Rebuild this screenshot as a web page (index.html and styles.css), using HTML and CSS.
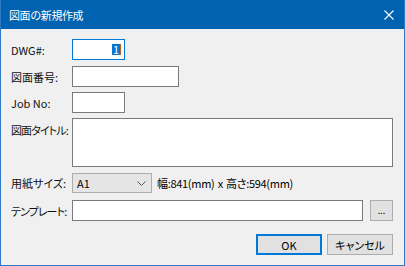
FILE: index.html
```html
<!DOCTYPE html>
<html lang="ja">
<head>
    <meta charset="UTF-8">
    <title>図面の新規作成</title>
    <link rel="stylesheet" href="styles.css">
</head>
<body>
    <div class="dialog">
        <!-- タイトルバー -->
        <div class="titlebar">
            <span class="title">図面の新規作成</span>
            <svg class="close" width="10" height="10" viewBox="0 0 10 10">
                <path d="M0.5 0.5 L9.5 9.5 M9.5 0.5 L0.5 9.5" stroke="#fff" stroke-width="1.1" fill="none"/>
            </svg>
        </div>

        <div class="form">
            <div class="row row-dwg">
                <label class="label">DWG#:</label>
                <div class="input input-short focused"><span class="sel">1</span></div>
            </div>
            <div class="row row-no">
                <label class="label">図面番号:</label>
                <div class="input input-mid"></div>
            </div>
            <div class="row row-job">
                <label class="label">Job No:</label>
                <div class="input input-short"></div>
            </div>
            <div class="row row-title">
                <label class="label tight">図面タイトル:</label>
                <div class="input textarea"></div>
            </div>
            <div class="row row-size">
                <label class="label">用紙サイズ:</label>
                <div class="combo">
                    <span>A1</span>
                    <svg width="9" height="5" viewBox="0 0 9 5">
                        <path d="M0.5 0.5 L4.5 4.5 L8.5 0.5" stroke="#555" fill="none"/>
                    </svg>
                </div>
                <span class="size-text">幅:841(mm) x 高さ:594(mm)</span>
            </div>
            <div class="row row-tpl">
                <label class="label tight">テンプレート:</label>
                <div class="input input-long"></div>
                <button class="btn browse">...</button>
            </div>
            <div class="actions">
                <button class="btn ok">OK</button>
                <button class="btn">キャンセル</button>
            </div>
        </div>
    </div>
</body>
</html>
```

FILE: styles.css
```css
/* 基本 */
body {
    margin: 0;
    font-family: "Noto Sans CJK JP", "Noto Sans", sans-serif;
    font-size: 11px;
    font-feature-settings: "palt";
    color: #000;
}

.dialog {
    width: 405px;
    height: 266px;
    box-sizing: border-box;
    background-color: #f0f0f0;
    border: 1px solid #2f78c4;
    border-top: none;
    overflow: hidden;
}

/* タイトルバー */
.titlebar {
    height: 29px;
    margin: 0 -1px;
    background-color: #0063b1;
    color: #fff;
    display: flex;
    align-items: center;
    justify-content: space-between;
    padding: 0 11px 0 9px;
}

.title {
    font-size: 11px;
    letter-spacing: -0.4px;
    font-feature-settings: normal;
}

.close {
    display: block;
}

/* フォーム */
.form {
    padding: 10px 11px 0 10px;
}

.row {
    display: flex;
    align-items: center;
    height: 21px;
}

.row-no { margin-top: 6px; }
.row-job { margin-top: 5px; }
.row-title { margin-top: 5px; align-items: flex-start; height: 49px; }
.row-size { margin-top: 6px; height: 20px; }
.row-tpl { margin-top: 7px; }

.label {
    width: 61px;
    flex-shrink: 0;
    white-space: nowrap;
    line-height: 14px;
    color: #111;
}

.tight {
    letter-spacing: -0.9px;
}

.row-title .label {
    padding-top: 5px;
}

.input {
    height: 21px;
    box-sizing: border-box;
    background-color: #fff;
    border: 1px solid #7a7a7a;
}

.input-short { width: 53px; }
.input-mid { width: 107px; }
.input-long { width: 291px; }

.textarea {
    width: 321px;
    height: 49px;
}

.focused {
    border-color: #0078d7;
    display: flex;
    align-items: center;
    justify-content: flex-end;
    padding-right: 3px;
}

.sel {
    background-color: #0078d7;
    color: #fff;
    line-height: 11px;
    padding: 0 1px;
    border-right: 1px solid #c06020;
}

/* 用紙サイズ */
.combo {
    width: 80px;
    height: 20px;
    box-sizing: border-box;
    background-color: #e5e5e5;
    border: 1px solid #acacac;
    display: flex;
    align-items: center;
    justify-content: space-between;
    padding: 0 5px 0 4px;
}

.size-text {
    margin-left: 5px;
    white-space: nowrap;
    letter-spacing: -0.3px;
    word-spacing: 1px;
}

/* ボタン */
.btn {
    font-family: inherit;
    font-size: 11px;
    font-feature-settings: "palt";
    color: #000;
    background-color: #e1e1e1;
    border: 1px solid #adadad;
    height: 21px;
    padding: 0;
    box-sizing: border-box;
    white-space: nowrap;
}

.browse {
    width: 23px;
    margin-left: 7px;
    font-size: 9px;
}

.actions {
    display: flex;
    justify-content: flex-end;
    gap: 5px;
    margin-top: 13px;
}

.actions .btn {
    width: 66px;
}

.ok {
    border: 1px solid #0078d7;
    box-shadow: inset 0 0 0 1px #0078d7;
}
```
